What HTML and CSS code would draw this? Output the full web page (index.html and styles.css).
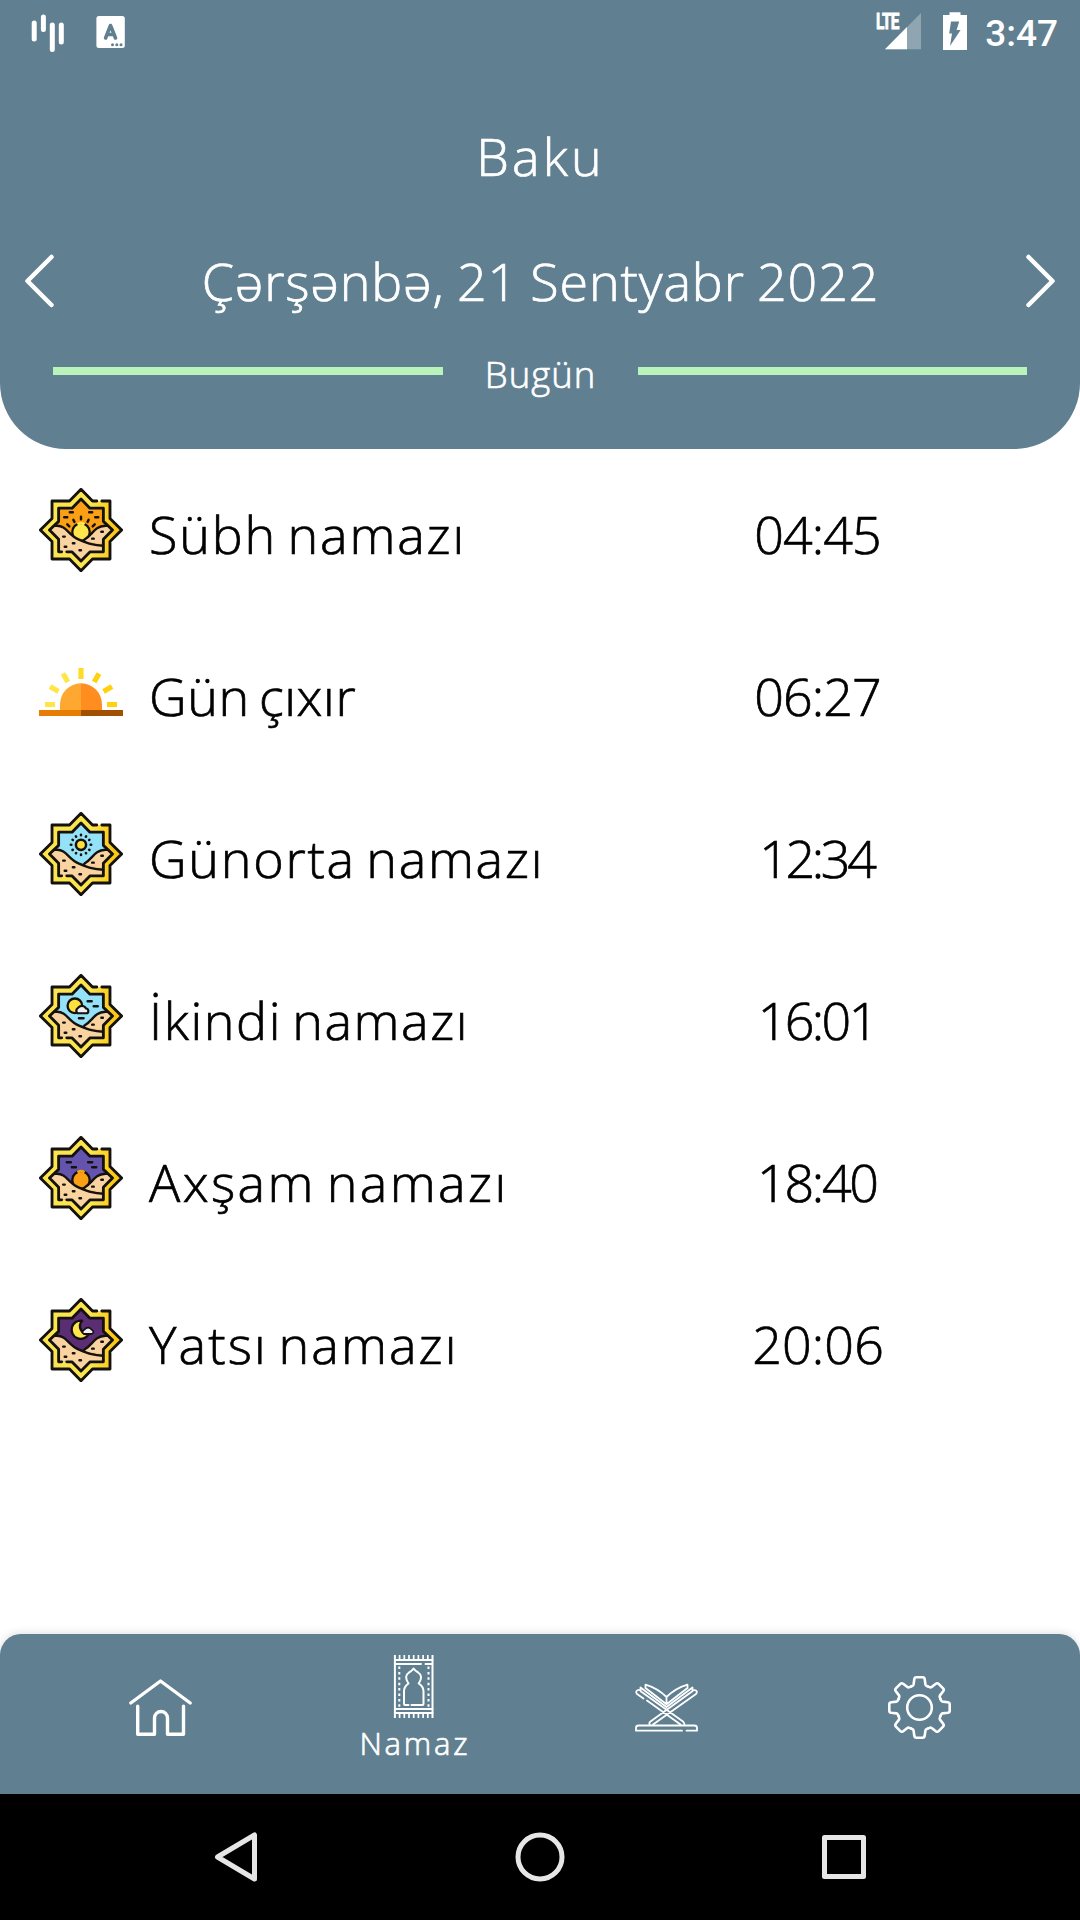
FILE: index.html
```
<!DOCTYPE html>
<html lang="az">
<head>
<meta charset="utf-8">
<title>Namaz</title>
<link rel="stylesheet" href="styles.css">
</head>
<body>
<svg class="defs" aria-hidden="true">
  <defs>
    <clipPath id="inner"><path d="M42 11.5 50.8 20.5H64V33.5L73 42 64 51V63.5H51L42 72.5 33 63.5H20V51L11 42 20 33.5V20.5H33.2Z"/></clipPath>
    <linearGradient id="gold"><stop offset=".62" stop-color="#fbe54e"/><stop offset=".9" stop-color="#fbc915"/></linearGradient>
    <symbol id="frame" viewBox="0 0 84 84">
      <path d="M42 2 53.3 13.5H70.5V30.7L82 42 70.5 53.3V70.5H53.3L42 82 30.7 70.5H13.5V53.3L2 42 13.5 30.7V13.5H30.7Z M42 11.5 33.2 20.5H20V33.5L11 42 20 51V63.5H33L42 72.5 51 63.5H64V51L73 42 64 33.5V20.5H50.8Z" fill="url(#gold)" fill-rule="evenodd"/>
      <path d="M57.5 13.5H53.3L42 2 30.7 13.5H13.5V30.7L2 42 13.5 53.3V70.5H30.7L42 82 53.3 70.5H70.5V53.3L82 42 70.5 30.7V13.5H62.5M28 63.5H33L42 72.5 51 63.5H64V51L73 42 64 33.5V20.5H50.8L42 11.5 33.2 20.5H20V33.5L11 42 20 51V63.5H23" fill="none" stroke="#15110e" stroke-width="2.800" stroke-linecap="round" stroke-linejoin="round"/>
    </symbol>
    <symbol id="dunes" viewBox="0 0 84 84">
      <g clip-path="url(#inner)">
        <path d="M44 53C51 48 55 38 64 37.5H76V60Z" fill="#f6c583"/>
        <path d="M44 53C52 49 57 38 66 37.5H76V54L62 55Z" fill="#fad4a0"/>
        <path d="M8 37.5H18C28 37.5 29 47 40 51.5S54 57 64 57.5V75H8Z" fill="#fad4a0"/>
        <path d="M10 37.8H18C28 37.5 29 47 40 51.5S54 57 64 57.5M44.5 52C54 47 54 38.5 66 37.8H75" fill="none" stroke="#15110e" stroke-width="2.3"/>
      </g>
      <path d="M24.5 48.5H26M34 55H35.500M26 58.500H27.500M40.500 62H42M53 50.500H54.500M62 43.700H63.500" stroke="#15110e" stroke-width="2.400" stroke-linecap="round"/>
    </symbol>
  </defs>
</svg>

<div class="screen">
  <header class="header">
    <div class="status">
      <svg class="status__left" width="100" height="63" viewBox="0 0 100 63">
        <g stroke="#fff" stroke-width="5" stroke-linecap="round"><path d="M7.200 23V39M16.400 17V29.500M25.300 25V49.500M34.300 25V42"/></g>
        <rect x="69.400" y="16" width="28.400" height="32" rx="2.500" fill="#fff"/>
        <path d="M78.600 38 83.500 25.500 88.500 38M80.500 34.500H86.500" fill="none" stroke="#607f91" stroke-width="3.600" stroke-linecap="round" stroke-linejoin="round"/>
        <g fill="#607f91"><circle cx="85.500" cy="44.700" r="1.500"/><circle cx="89.800" cy="44.700" r="1.500"/><circle cx="94" cy="44.700" r="1.500"/></g>
      </svg>
      <div class="status__right">
        <span class="lte">LTE</span>
        <svg width="101" height="63" viewBox="0 0 101 63">
          <path d="M19 49.300 55 13V49.300Z" fill="#fff" opacity=".3"/>
          <path d="M19 49.300 41 27V49.300Z" fill="#fff"/>
          <path d="M83.500 12.300H94.500V15H101V50H77V15H83.500Z" fill="#fff"/>
          <path d="M85 21.500H93.200L90.600 30H94.600L84 46 86 33.500H83.200Z" fill="#607f91"/>
        </svg>
        <span class="clock">3:47</span>
      </div>
    </div>
    <h1 class="city"><span class="tracked">Baku</span></h1>
    <div class="date">
      <svg width="30" height="54" viewBox="0 0 30 54"><path d="M26.500 3 2.500 27 26.500 51"/></svg>
      <span class="tracked date__text">Çərşənbə, 21 Sentyabr 2022</span>
      <svg width="30" height="54" viewBox="0 0 30 54"><path d="M3.500 3 27.500 27 3.500 51"/></svg>
    </div>
    <div class="today">
      <span class="today__bar"></span>
      <span class="today__text"><span class="tracked">Bugün</span></span>
      <span class="today__bar"></span>
    </div>
  </header>

  <main class="list">
    <div class="row row--subh">
      <svg class="row__icon" viewBox="0.700 0.700 82.600 82.600">
        <path d="M42 11.500 50.800 20.500H64V33.500L73 42 64 51V63.500H51L42 72.500 33 63.500H20V51L11 42 20 33.500V20.500H33.200Z" fill="#fb9f15"/>
        <circle cx="42" cy="44" r="8.600" fill="#fde74c" stroke="#15110e" stroke-width="2.200"/>
        <path d="M38.500 36.300Q42 34.500 45.500 36.300" fill="none" stroke="#fde74c" stroke-width="2.800"/>
        <path d="M31 24.500H34M50 24.500H53M25.500 29.500H28.500M56 29.500H59M42 29V31.500M34.500 32 35.500 34M49.500 32 48.500 34M28.500 36.500 30.500 38.500M55.500 36.500 53.500 38.500" stroke="#15110e" stroke-width="2.400" stroke-linecap="round"/>
        <use href="#dunes" width="84" height="84"/><use href="#frame" width="84" height="84"/>
      </svg>
      <span class="row__name">Sübh namazı</span><span class="row__time"><span class="tracked">04:45</span></span>
    </div>
    <div class="row row--gun">
      <svg class="row__icon" viewBox="0 0 84 84">
        <path d="M21 61V54.500A21 21 0 0 1 42 33.300V61Z" fill="#ffa831"/>
        <path d="M42 33.300A21 21 0 0 1 63 54.500V61H42Z" fill="#ff8d1f"/>
        <path d="M0 60H42V66H0Z" fill="#e87d04"/><path d="M42 60H84V66H42Z" fill="#a14f00"/>
        <path d="M6 54.500H16M11 36.500 19.500 41.500M24 23.500 28.800 32" stroke="#ffe646" stroke-width="5.200"/>
        <path d="M42 18V29" stroke="#ffdc24" stroke-width="5.200"/>
        <path d="M68 54.500H78M73 36.500 64.500 41.500M60 23.500 55.200 32" stroke="#ffd20d" stroke-width="5.200"/>
      </svg>
      <span class="row__name">Gün çıxır</span><span class="row__time"><span class="tracked">06:27</span></span>
    </div>
    <div class="row row--gunorta">
      <svg class="row__icon" viewBox="0.700 0.700 82.600 82.600">
        <path d="M42 11.500 50.800 20.500H64V33.500L73 42 64 51V63.500H51L42 72.500 33 63.500H20V51L11 42 20 33.500V20.500H33.200Z" fill="#93e2f8"/>
        <circle cx="42" cy="33" r="5" fill="#ffdf3b" stroke="#15110e" stroke-width="2.500"/>
        <path d="M42 23V23.500M42 42.500V43M32 33H32.500M51.500 33H52M37 24.700 37.200 25M47 24.700 46.800 25M33.700 28 34 28.200M50.300 28 50 28.200M33.700 38 34 37.800M50.300 38 50 37.800M37 41.300 37.200 41M47 41.300 46.800 41" stroke="#15110e" stroke-width="2.500" stroke-linecap="round"/>
        <use href="#dunes" width="84" height="84"/><use href="#frame" width="84" height="84"/>
      </svg>
      <span class="row__name">Günorta namazı</span><span class="row__time"><span class="tracked">12:34</span></span>
    </div>
    <div class="row row--ikindi">
      <svg class="row__icon" viewBox="0.700 0.700 82.600 82.600">
        <path d="M42 11.500 50.800 20.500H64V33.500L73 42 64 51V63.500H51L42 72.500 33 63.500H20V51L11 42 20 33.500V20.500H33.200Z" fill="#93e2f8"/>
        <circle cx="36" cy="32" r="7.200" fill="#ffdf3b" stroke="#15110e" stroke-width="2.300"/>
        <path d="M38.500 39.300A3.300 3.300 0 0 1 39 34 4.700 4.700 0 0 1 47 34.500 2.600 2.600 0 0 1 48 39.300Z" fill="#eef0f6" stroke="#15110e" stroke-width="2.200" stroke-linejoin="round"/>
        <path d="M48.500 27.500H52.500M54.500 32.500H58.500M40 44.200H44.500" stroke="#15110e" stroke-width="2.400" stroke-linecap="round"/>
        <use href="#dunes" width="84" height="84"/><use href="#frame" width="84" height="84"/>
      </svg>
      <span class="row__name">İkindi namazı</span><span class="row__time"><span class="tracked">16:01</span></span>
    </div>
    <div class="row row--axsam">
      <svg class="row__icon" viewBox="0.700 0.700 82.600 82.600">
        <path d="M42 11.500 50.800 20.500H64V33.500L73 42 64 51V63.500H51L42 72.500 33 63.500H20V51L11 42 20 33.500V20.500H33.200Z" fill="#6554ae"/>
        <circle cx="42" cy="44" r="8.600" fill="#fb9f15" stroke="#15110e" stroke-width="2.300"/>
        <path d="M38.500 36.300Q42 34.500 45.500 36.300" fill="none" stroke="#fb9f15" stroke-width="2.800"/>
        <path d="M28 26.500H32M49 26.500H53M33 31.500H37M53 31.500H57" stroke="#15110e" stroke-width="2.400" stroke-linecap="round"/>
        <use href="#dunes" width="84" height="84"/><use href="#frame" width="84" height="84"/>
      </svg>
      <span class="row__name">Axşam namazı</span><span class="row__time"><span class="tracked">18:40</span></span>
    </div>
    <div class="row row--yatsi">
      <svg class="row__icon" viewBox="0.700 0.700 82.600 82.600">
        <path d="M42 11.500 50.800 20.500H64V33.500L73 42 64 51V63.500H51L42 72.500 33 63.500H20V51L11 42 20 33.500V20.500H33.200Z" fill="#5b2d74"/>
        <path d="M43 23A9 9 0 1 0 49.500 36.500 8.200 8.200 0 0 1 43 23Z" fill="#fde74c" stroke="#15110e" stroke-width="2.300" stroke-linejoin="round"/>
        <path d="M44.500 36A2.400 2.400 0 0 1 45.500 31.800 4 4 0 0 1 52.500 32 2.200 2.200 0 0 1 53 36Z" fill="#eef0f6" stroke="#15110e" stroke-width="1.600" stroke-linejoin="round"/>
        <use href="#dunes" width="84" height="84"/><use href="#frame" width="84" height="84"/>
      </svg>
      <span class="row__name">Yatsı namazı</span><span class="row__time"><span class="tracked">20:06</span></span>
    </div>
  </main>

  <nav class="tabs">
    <div class="tab">
      <svg viewBox="0 0 63 63" stroke-width="3.400"><path d="M1.800 27 31.500 5 61.200 27M8.700 30.300V58.300H25.500V42A6.500 6.500 0 0 1 38.500 42V58.300H54.500V30.300"/></svg>
    </div>
    <div class="tab tab--active">
      <svg viewBox="0 0 63 63" stroke-width="2">
        <path d="M12.900 0V63M50.500 0V63" stroke-linecap="butt"/>
        <path d="M12.900 5.100H50.500M12.900 54H50.500M12.900 58H50.500M14 8.900H39M43.500 8.900H50"/>
        <path d="M17.600 0V4.500M22.300 0V4.500M27 0V4.500M31.700 0V4.500M36.400 0V4.500M41.100 0V4.500M45.800 0V4.500M17.600 58.500V63M22.300 58.500V63M27 58.500V63M31.700 58.500V63M36.400 58.500V63M41.100 58.500V63M45.800 58.500V63" stroke-width="1.700" stroke-linecap="butt"/>
        <path d="M17.300 11.500V52M46.500 11.500V52" stroke-dasharray="2.500 2.900" stroke-linecap="butt"/>
        <path d="M26.500 50H23Q22 50 22 49V36.500Q22 31.500 26.500 28.500 21.500 21 27 17.500 30 16 31.600 13.500 33.200 16 36.200 17.500 41.700 21 36.700 28.500 41.500 31.500 41.500 36.500V49Q41.500 50 40.500 50H29.500"/>
      </svg>
      <span class="tab__label"><span class="tracked">Namaz</span></span>
    </div>
    <div class="tab">
      <svg viewBox="0 0 63 63" stroke-width="1.800">
        <path d="M47 54.700H1V52Q1 49.500 3.500 49.500H59.500Q62 49.500 62 52V54.700H51.500"/>
        <path d="M8.500 22.500 2 18Q.2 15.500 2.500 14.300T6 15.500L48 45.500Q49.500 47 49.500 49M12 24.500 45.500 48.500M5.500 14.800V11.500L31.500 31 57.500 11.500V14.800M15 49Q13.500 47 15.500 45.500L57 15.500Q58 13.500 60.500 14.300T61 18L18 48.500"/>
        <path d="M10.500 12V8.700Q22 12 31.500 21 41 12 52.500 8.700V12L31.500 28.300 10.500 12M31.500 21V28.300"/>
      </svg>
    </div>
    <div class="tab">
      <svg viewBox="0 0 63 63" stroke-width="2.600">
        <defs><path id="tooth" d="M22.850 10.600 24.200 10Q25.400 9.600 25.600 8.400L26.300 3.200Q26.600 1.300 28.300 1.300H34.700Q36.400 1.300 36.700 3.200L37.400 8.400Q37.600 9.600 38.800 10L40.150 10.600"/></defs>
        <use href="#tooth"/><use href="#tooth" transform="rotate(45 31.500 31.500)"/><use href="#tooth" transform="rotate(90 31.500 31.500)"/><use href="#tooth" transform="rotate(135 31.500 31.500)"/><use href="#tooth" transform="rotate(180 31.500 31.500)"/><use href="#tooth" transform="rotate(225 31.500 31.500)"/><use href="#tooth" transform="rotate(270 31.500 31.500)"/><use href="#tooth" transform="rotate(315 31.500 31.500)"/>
        <circle cx="31.500" cy="31.500" r="12.300"/>
      </svg>
    </div>
  </nav>

  <footer class="system">
    <svg viewBox="0 0 54 54"><path d="M44.500 5V49L7.500 27Z"/></svg>
    <svg viewBox="0 0 54 54"><circle cx="27" cy="27" r="22"/></svg>
    <svg viewBox="0 0 54 54"><path d="M8.500 7.500H47.500V46.500H8.500Z"/></svg>
  </footer>
</div>
</body>
</html>
```
FILE: styles.css
```
:root {
  --slate: #607f91;
  --track: 0px;
}

* { box-sizing: border-box; }

body {
  margin: 0;
  background: #fff;
  color: #000;
  font-family: "Open Sans", "Noto Sans", sans-serif;
  font-weight: 300;
  -webkit-text-stroke: .7px currentColor;
}

.defs { position: absolute; width: 0; height: 0; }

.screen {
  width: 1080px;
  height: 1920px;
  display: flex;
  flex-direction: column;
}

/* the trailing gap is pulled back so that tracked text stays centred */
.tracked { letter-spacing: var(--track); margin-right: calc(-1 * var(--track)); }

.header {
  height: 449px;
  background: var(--slate);
  color: #fff;
  border-radius: 0 0 66px 66px;
}

.status {
  height: 63px;
  display: flex;
  justify-content: space-between;
  padding: 0 22px 0 27px;
}
.status svg { display: block; }
.status__right {
  display: flex;
  font-family: Roboto, sans-serif;
  font-weight: 500;
  -webkit-text-stroke: 0;
}
.lte {
  width: 24px;
  margin-right: -34px;
  padding-top: 9px;
  font: 700 22px/25px Roboto, sans-serif;
  letter-spacing: -1px;
  -webkit-text-stroke: .8px currentColor;
  transform: scaleX(.7);
  transform-origin: left;
}
.clock { margin-left: 18px; font-size: 37px; line-height: 67px; }

.city {
  margin: 61px 0 0;
  font-size: 52px;
  line-height: 64px;
  font-weight: 300;
  text-align: center;
  --track: 3.1px;
}
.city .tracked { position: relative; left: -1px; }

.date {
  margin-top: 61px;
  height: 64px;
  padding: 0 25px;
  display: flex;
  align-items: center;
  justify-content: space-between;
  font-size: 52px;
  line-height: 64px;
  --track: .85px;
}
.date__text { word-spacing: -2px; }
.date svg { fill: none; stroke: #fff; stroke-width: 4.5; stroke-linecap: round; stroke-linejoin: round; }

.today {
  margin-top: 37px;
  padding: 0 53px;
  height: 48px;
  display: flex;
  font-size: 36.5px;
  line-height: 48px;
  --track: 1px;
}
.today__bar { width: 389.5px; height: 8px; margin-top: 17px; background: #b9f2bb; }
.today__text { flex: 1; text-align: center; }

.list { flex: 1; }
.row {
  height: 162px;
  padding-left: 39px;
  display: grid;
  grid-template-columns: 84px 434px 1fr;
  align-items: center;
  font-size: 52px;
  line-height: 64px;
}
.row__icon { width: 84px; height: 84px; }
.row__name { padding: 7px 0 0 26px; letter-spacing: var(--name-track); word-spacing: -5px; white-space: nowrap; }
.row__time { padding: 7px 1px 0 0; text-align: center; }
.row--subh { --name-track: 1.85px; --track: -.93px; }
.row--gun { --name-track: .6px; --track: -.93px; }
.row--gunorta { --name-track: 1.75px; --track: -3.35px; }
.row--ikindi { --name-track: 1.6px; --track: -2.6px; }
.row--axsam { --name-track: 2.4px; --track: -2.3px; }
.row--yatsi { --name-track: 2.1px; --track: .15px; }

.tabs {
  height: 160px;
  padding: 0 34px;
  display: grid;
  grid-template-columns: repeat(4, 1fr);
  background: var(--slate);
  color: #fff;
  border-radius: 21px 21px 0 0;
  box-shadow: 0 -1px 9px rgba(0, 0, 0, .13);
}
.tab {
  display: flex;
  flex-direction: column;
  align-items: center;
  padding-top: 42px;
}
.tab--active { padding-top: 21px; }
.tab svg { width: 63px; height: 63px; fill: none; stroke: #fff; stroke-linecap: round; stroke-linejoin: round; overflow: visible; }
.tab__label { margin-top: 5px; font-size: 31px; line-height: 40px; --track: 2.8px; }

.system {
  height: 126px;
  padding: 0 210px;
  display: flex;
  align-items: center;
  justify-content: space-between;
  background: #000;
}
.system svg { width: 54px; height: 54px; fill: none; stroke: #e6e6e6; stroke-width: 5; stroke-linejoin: round; }
```
